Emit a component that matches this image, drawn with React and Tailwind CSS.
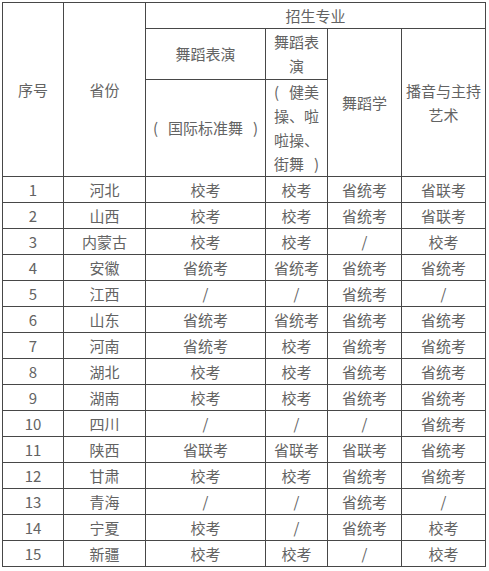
import React from 'react'

const rows = [
  ['1', '河北', '校考', '校考', '省统考', '省联考'],
  ['2', '山西', '校考', '校考', '省统考', '省联考'],
  ['3', '内蒙古', '校考', '校考', '/', '校考'],
  ['4', '安徽', '省统考', '省统考', '省统考', '省统考'],
  ['5', '江西', '/', '/', '省统考', '/'],
  ['6', '山东', '省统考', '省统考', '省统考', '省统考'],
  ['7', '河南', '省统考', '校考', '省统考', '省统考'],
  ['8', '湖北', '校考', '校考', '省统考', '省统考'],
  ['9', '湖南', '校考', '校考', '省统考', '省统考'],
  ['10', '四川', '/', '/', '/', '省统考'],
  ['11', '陕西', '省联考', '省联考', '省联考', '省统考'],
  ['12', '甘肃', '校考', '校考', '省统考', '省统考'],
  ['13', '青海', '/', '/', '省统考', '/'],
  ['14', '宁夏', '校考', '/', '省统考', '校考'],
  ['15', '新疆', '校考', '校考', '/', '校考'],
]

const cell = 'border border-[#474747] p-0 text-center align-middle font-normal'

// brackets take a full em, glyph pushed to the outer side like the original
const Open = () => <span className="inline-block w-[15px] text-left">(</span>
const Close = () => <span className="inline-block w-[15px] text-right">)</span>

const App = () => {
  return (
    <div className="w-[489px] h-[571px] bg-white pt-[2px] pl-[2px] text-[15px] leading-[24px] text-[#636363] font-['Noto_Sans_CJK_SC','Noto_Sans',sans-serif]">
      <table className="border-collapse table-fixed w-[483px]">
        <colgroup>
          <col className="w-[61px]" />
          <col className="w-[82px]" />
          <col className="w-[120px]" />
          <col className="w-[62px]" />
          <col className="w-[74px]" />
          <col className="w-[84px]" />
        </colgroup>
        <thead>
          <tr className="h-[26px]">
            <th rowSpan={3} className={cell}>序号</th>
            <th rowSpan={3} className={cell}>省份</th>
            <th colSpan={4} className={cell}>招生专业</th>
          </tr>
          <tr className="h-[51px]">
            <th className={cell}>舞蹈表演</th>
            <th className={cell}>
              舞蹈表<br />演
            </th>
            <th rowSpan={2} className={cell}>舞蹈学</th>
            <th rowSpan={2} className={cell}>
              播音与主持<br />艺术
            </th>
          </tr>
          <tr className="h-[97px]">
            <th className={cell}>
              <Open />国际标准舞<Close />
            </th>
            <th className={cell}>
              <Open />健美<br />操、啦<br />啦操、<br />街舞<Close />
            </th>
          </tr>
        </thead>
        <tbody>
          {rows.map((row, index) => (
            <tr key={index} className="h-[26px]">
              {row.map((text, i) => (
                <td key={i} className={cell}>
                  {text}
                </td>
              ))}
            </tr>
          ))}
        </tbody>
      </table>
    </div>
  )
}

export default App
